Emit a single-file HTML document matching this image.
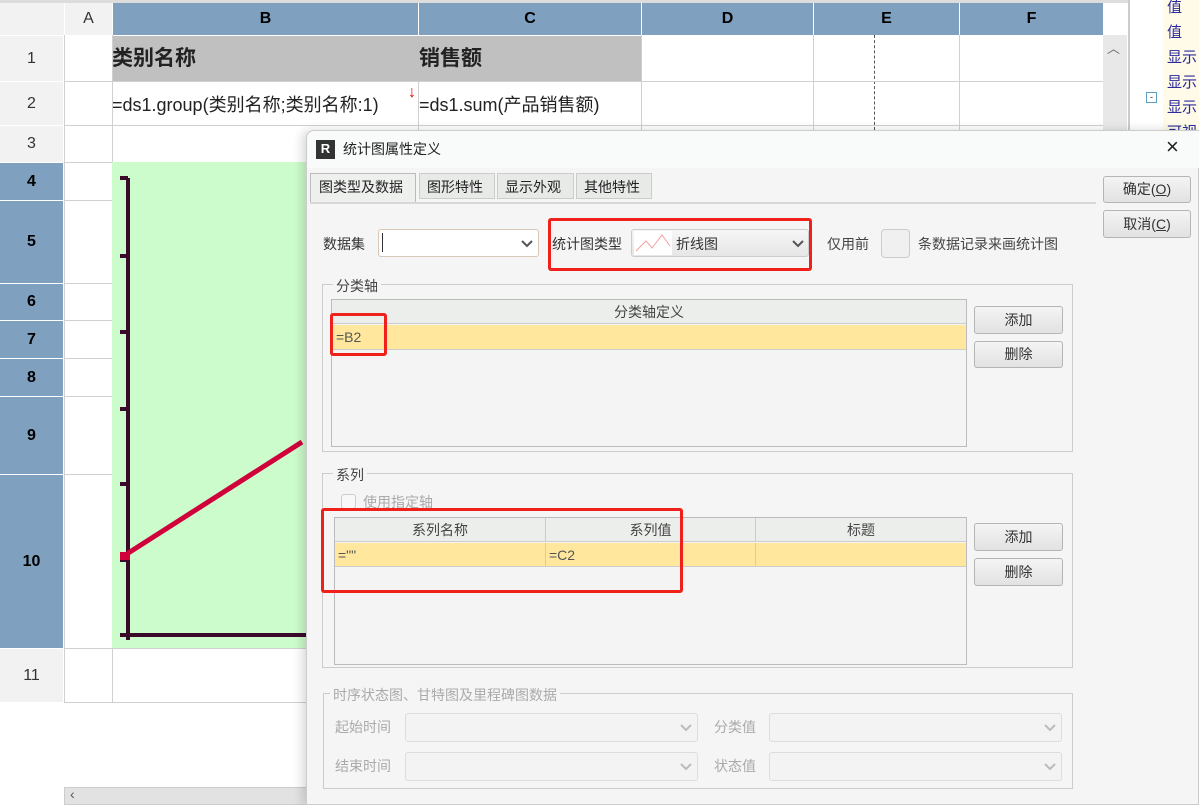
<!DOCTYPE html>
<html><head><meta charset="utf-8"><style>
*{box-sizing:border-box;margin:0;padding:0}
body{width:1199px;height:805px;overflow:hidden;background:#fff;font-family:"Liberation Sans","Noto Sans CJK SC",sans-serif;position:relative;font-size:14px;color:#222}
.a{position:absolute}
.hb{background:#7fa0bf;color:#000;font-weight:bold;text-align:center;font-size:16px}
.hg{background:#f2f2f2;color:#333;text-align:center;font-size:16px}
.vl{position:absolute;width:1px;background:#d0d0d0}
.hl{position:absolute;height:1px;background:#d0d0d0}
.btn{position:absolute;border:1px solid #b5b5b5;border-radius:3px;background:linear-gradient(#f4f4f4,#e2e2e2);text-align:center;font-size:14px;color:#333}
.red{position:absolute;border:3px solid #f0211a;border-radius:3px}
.grp{position:absolute;border:1px solid #ccc}
.lg{position:absolute;background:#f4f5f4;padding:0 3px;font-size:14px;color:#444}
.cb{position:absolute;border:1px solid #ddd;border-radius:3px;background:#f2f3f2}
.dis{color:#aaa}
.chev{position:absolute;width:12px;height:8px}
</style></head><body>
<div class="a" style="left:0;top:0;width:1130px;height:3px;background:#ddd"></div>
<div class="a hg" style="left:0;top:3px;width:64px;height:32px"></div>
<div class="a hg" style="left:65px;top:3px;width:47px;height:32px;line-height:32px">A</div>
<div class="a hb" style="left:113px;top:3px;width:305px;height:32px;line-height:32px">B</div>
<div class="a hb" style="left:419px;top:3px;width:222px;height:32px;line-height:32px">C</div>
<div class="a hb" style="left:642px;top:3px;width:171px;height:32px;line-height:32px">D</div>
<div class="a hb" style="left:814px;top:3px;width:145px;height:32px;line-height:32px">E</div>
<div class="a hb" style="left:960px;top:3px;width:143px;height:32px;line-height:32px">F</div>
<div class="a hg" style="left:0;top:36px;width:63px;height:45px;line-height:45px">1</div>
<div class="a hg" style="left:0;top:82px;width:63px;height:43px;line-height:43px">2</div>
<div class="a hg" style="left:0;top:126px;width:63px;height:36px;line-height:36px">3</div>
<div class="a hb" style="left:0;top:163px;width:63px;height:37px;line-height:37px">4</div>
<div class="a hb" style="left:0;top:201px;width:63px;height:82px;line-height:82px">5</div>
<div class="a hb" style="left:0;top:284px;width:63px;height:36px;line-height:36px">6</div>
<div class="a hb" style="left:0;top:321px;width:63px;height:37px;line-height:37px">7</div>
<div class="a hb" style="left:0;top:359px;width:63px;height:37px;line-height:37px">8</div>
<div class="a hb" style="left:0;top:397px;width:63px;height:77px;line-height:77px">9</div>
<div class="a hb" style="left:0;top:475px;width:63px;height:173px;line-height:173px">10</div>
<div class="a hg" style="left:0;top:649px;width:63px;height:53px;line-height:53px">11</div>
<div class="a" style="left:112px;top:36px;width:529px;height:45px;background:#c0c0c0"></div>
<div class="a" style="left:112px;top:42px;font-size:21px;font-weight:bold;color:#222">类别名称</div>
<div class="a" style="left:419px;top:42px;font-size:21px;font-weight:bold;color:#222">销售额</div>
<div class="a" style="left:112px;top:91px;font-size:18px;color:#222">=ds1.group(类别名称;类别名称:1)</div>
<div class="a" style="left:408px;top:84px;color:#e00;font-size:16px">↓</div>
<div class="a" style="left:419px;top:91px;font-size:18px;color:#222">=ds1.sum(产品销售额)</div>
<div class="vl" style="left:112px;top:35px;height:667px"></div>
<div class="vl" style="left:64px;top:35px;height:667px"></div>
<div class="vl" style="left:418px;top:81px;height:50px"></div>
<div class="vl" style="left:641px;top:35px;height:95px"></div>
<div class="vl" style="left:813px;top:35px;height:95px"></div>
<div class="a" style="left:874px;top:35px;height:95px;border-left:1px dashed #555"></div>
<div class="vl" style="left:959px;top:35px;height:95px"></div>
<div class="hl" style="left:64px;top:81px;width:1040px"></div>
<div class="hl" style="left:64px;top:125px;width:1040px"></div>
<div class="hl" style="left:64px;top:162px;width:48px"></div>
<div class="hl" style="left:64px;top:200px;width:48px"></div>
<div class="hl" style="left:64px;top:283px;width:48px"></div>
<div class="hl" style="left:64px;top:320px;width:48px"></div>
<div class="hl" style="left:64px;top:358px;width:48px"></div>
<div class="hl" style="left:64px;top:396px;width:48px"></div>
<div class="hl" style="left:64px;top:474px;width:48px"></div>
<div class="hl" style="left:64px;top:648px;width:250px"></div>
<div class="hl" style="left:64px;top:702px;width:250px"></div>
<div class="a" style="left:112px;top:162px;width:200px;height:486px;background:#ccfccc"></div>
<svg class="a" style="left:112px;top:162px" width="200" height="486">
<g stroke="#3a0a2a" stroke-width="4" fill="none">
<path d="M16 16V478M8 16H16M8 94H16M8 170H16M8 247H16M8 322H16M8 398H16M8 473H194"/>
</g>
<path d="M10 395 L190 280" stroke="#d0003a" stroke-width="5"/>
<rect x="8" y="390" width="10" height="8" fill="#d0003a"/>
</svg>
<div class="a" style="left:1103px;top:35px;width:24px;height:100px;background:#e8e8e8"></div>
<div class="a" style="left:1107px;top:38px;color:#666;font-size:13px">︿</div>
<div class="a" style="left:1128px;top:0;width:2px;height:805px;background:#ccc"></div>
<div class="a" style="left:1163px;top:0;width:36px;height:140px;background:#fffbe8"></div>
<div class="a" style="left:1167px;top:-5px;color:#2b2b9a;font-size:15px;line-height:25px">值<br>值<br>显示<br>显示<br>显示<br>可视</div>
<div class="a" style="left:1146px;top:92px;width:11px;height:11px;border:1px solid #5aa0c0;font-size:9px;line-height:8px;text-align:center">-</div>
<div class="a" style="left:64px;top:787px;width:245px;height:18px;background:#e2e2e2;border:1px solid #ccc"></div>
<div class="a" style="left:70px;top:786px;color:#555">‹</div>
<div class="a" style="left:306px;top:130px;width:893px;height:675px;background:#f4f5f4;border:1px solid #ccc;border-radius:8px 0 0 0;box-shadow:-4px 0 10px rgba(0,0,0,.15)"></div>
<div class="a" style="left:307px;top:131px;width:892px;height:37px;background:#f9fafa;border-radius:8px 0 0 0"></div>
<div class="a" style="left:316px;top:140px;width:19px;height:19px;background:#333;color:#fff;font-size:13px;font-weight:bold;text-align:center;line-height:17px">R</div>
<div class="a" style="left:343px;top:139px;font-size:14px">统计图属性定义</div>
<div class="a" style="left:1166px;top:134px;font-size:22px;color:#222">×</div>
<div class="a" style="left:310px;top:173px;width:106px;height:30px;border:1px solid #bbb;border-bottom:none;background:#eef0ee;font-size:14px;padding:3px 0 0 8px">图类型及数据</div>
<div class="a" style="left:419px;top:173px;width:76px;height:26px;border:1px solid #ccc;background:#e8eae8;font-size:14px;padding:3px 0 0 7px">图形特性</div>
<div class="a" style="left:497px;top:173px;width:77px;height:26px;border:1px solid #ccc;background:#e8eae8;font-size:14px;padding:3px 0 0 7px">显示外观</div>
<div class="a" style="left:576px;top:173px;width:76px;height:26px;border:1px solid #ccc;background:#e8eae8;font-size:14px;padding:3px 0 0 7px">其他特性</div>
<div class="a" style="left:310px;top:202px;width:786px;height:2px;background:#d8d8d8"></div>
<div class="btn" style="left:1103px;top:176px;width:88px;height:27px;line-height:25px">确定(<u>O</u>)</div>
<div class="btn" style="left:1103px;top:210px;width:88px;height:28px;line-height:26px">取消(<u>C</u>)</div>
<div class="a" style="left:323px;top:234px;color:#333">数据集</div>
<div class="a" style="left:378px;top:229px;width:161px;height:28px;border:1px solid #d8c8b8;border-radius:3px;background:#fff"></div>
<div class="a" style="left:382px;top:233px;width:1px;height:19px;background:#333"></div>
<svg class="chev" style="left:521px;top:240px" viewBox="0 0 12 8"><path d="M1 1L6 6L11 1" stroke="#555" stroke-width="2" fill="none"/></svg>
<div class="a" style="left:552px;top:234px;color:#333">统计图类型</div>
<div class="a" style="left:631px;top:229px;width:178px;height:28px;border:1px solid #ccc;border-radius:3px;background:linear-gradient(#f6f6f6,#e6e6e6)"></div>
<svg class="a" style="left:634px;top:231px" width="38" height="24"><rect width="38" height="24" fill="#fff"/><path d="M2 20L12 10L18 17L28 4L36 15" stroke="#f4a0a0" fill="none"/></svg>
<div class="a" style="left:676px;top:234px;color:#333">折线图</div>
<svg class="chev" style="left:792px;top:240px" viewBox="0 0 12 8"><path d="M1 1L6 6L11 1" stroke="#555" stroke-width="2" fill="none"/></svg>
<div class="red" style="left:548px;top:218px;width:264px;height:53px"></div>
<div class="a" style="left:827px;top:234px;color:#444">仅用前</div>
<div class="a" style="left:881px;top:229px;width:29px;height:29px;border:1px solid #ccc;border-radius:4px;background:#f0f0f0"></div>
<div class="a" style="left:918px;top:234px;color:#444">条数据记录来画统计图</div>
<div class="grp" style="left:322px;top:284px;width:751px;height:168px"></div>
<div class="lg" style="left:333px;top:276px">分类轴</div>
<div class="a" style="left:331px;top:299px;width:636px;height:148px;border:1px solid #bbb;background:#f3f4f3"></div>
<div class="a" style="left:332px;top:300px;width:634px;height:24px;background:#eceeec;border-bottom:1px solid #ccc;text-align:center;line-height:24px;color:#444">分类轴定义</div>
<div class="a" style="left:332px;top:325px;width:634px;height:25px;background:#ffe89e;border-bottom:1px solid #ccc;padding-left:4px;line-height:25px;color:#555">=B2</div>
<div class="red" style="left:330px;top:313px;width:57px;height:43px"></div>
<div class="btn" style="left:974px;top:306px;width:89px;height:28px;line-height:26px">添加</div>
<div class="btn" style="left:974px;top:341px;width:89px;height:27px;line-height:25px">删除</div>
<div class="grp" style="left:322px;top:473px;width:751px;height:195px"></div>
<div class="lg" style="left:333px;top:465px">系列</div>
<div class="a" style="left:341px;top:494px;width:15px;height:15px;border:1px solid #ccc;border-radius:3px;background:#f8f8f8"></div>
<div class="a dis" style="left:363px;top:492px">使用指定轴</div>
<div class="a" style="left:334px;top:517px;width:633px;height:148px;border:1px solid #bbb;background:#f3f4f3"></div>
<div class="a" style="left:335px;top:518px;width:631px;height:24px;background:#eceeec;border-bottom:1px solid #ccc;color:#444;line-height:24px">
<span class="a" style="left:0;width:210px;text-align:center">系列名称</span><span class="a" style="left:210px;width:210px;text-align:center;border-left:1px solid #ccc">系列值</span><span class="a" style="left:420px;width:211px;text-align:center;border-left:1px solid #ccc">标题</span></div>
<div class="a" style="left:335px;top:543px;width:631px;height:24px;background:#ffe89e;border-bottom:1px solid #ccc;color:#555;line-height:24px">
<span class="a" style="left:3px">=""</span><span class="a" style="left:210px;height:24px;border-left:1px solid #ccc;padding-left:3px">=C2</span><span class="a" style="left:420px;height:24px;border-left:1px solid #ccc"></span></div>
<div class="red" style="left:321px;top:508px;width:362px;height:85px"></div>
<div class="btn" style="left:974px;top:523px;width:89px;height:28px;line-height:26px">添加</div>
<div class="btn" style="left:974px;top:558px;width:89px;height:28px;line-height:26px">删除</div>
<div class="grp" style="left:323px;top:693px;width:750px;height:96px"></div>
<div class="lg dis" style="left:330px;top:685px">时序状态图、甘特图及里程碑图数据</div>
<div class="a dis" style="left:335px;top:717px">起始时间</div>
<div class="cb" style="left:405px;top:713px;width:293px;height:29px"></div>
<svg class="chev" style="left:680px;top:724px" viewBox="0 0 12 8"><path d="M1 1L6 6L11 1" stroke="#bbb" stroke-width="2" fill="none"/></svg>
<div class="a dis" style="left:714px;top:717px">分类值</div>
<div class="cb" style="left:769px;top:713px;width:293px;height:29px"></div>
<svg class="chev" style="left:1044px;top:724px" viewBox="0 0 12 8"><path d="M1 1L6 6L11 1" stroke="#bbb" stroke-width="2" fill="none"/></svg>
<div class="a dis" style="left:335px;top:756px">结束时间</div>
<div class="cb" style="left:405px;top:752px;width:293px;height:29px"></div>
<svg class="chev" style="left:680px;top:763px" viewBox="0 0 12 8"><path d="M1 1L6 6L11 1" stroke="#bbb" stroke-width="2" fill="none"/></svg>
<div class="a dis" style="left:714px;top:756px">状态值</div>
<div class="cb" style="left:769px;top:752px;width:293px;height:29px"></div>
<svg class="chev" style="left:1044px;top:763px" viewBox="0 0 12 8"><path d="M1 1L6 6L11 1" stroke="#bbb" stroke-width="2" fill="none"/></svg>
</body></html>
